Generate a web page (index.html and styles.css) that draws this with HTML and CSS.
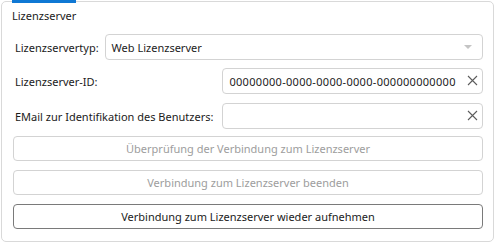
FILE: index.html
```html
<!DOCTYPE html>
<html lang="de">
<head>
  <meta charset="UTF-8">
  <meta name="viewport" content="width=device-width, initial-scale=1">
  <link rel="stylesheet" href="styles.css">
  <title>Lizenzserver</title>
</head>
<body>
  <div class="panel">
    <div class="tab">Lizenzserver</div>

    <div class="type-row">
      <label for="serverType">Lizenzservertyp:</label>
      <div class="select" id="serverType">
        <span>Web Lizenzserver</span>
        <span class="arrow"></span>
      </div>
    </div>

    <div class="fields">
      <label for="serverId">Lizenzserver-ID:</label>
      <div class="field">
        <input type="text" id="serverId" value="00000000-0000-0000-0000-000000000000">
        <svg class="clear" width="11" height="11" viewBox="0 0 11 11"><path d="M1 1 L10 10 M10 1 L1 10" stroke="#5c5c5c" stroke-width="1.1" fill="none"/></svg>
      </div>

      <label for="userMail">EMail zur Identifikation des Benutzers:</label>
      <div class="field">
        <input type="text" id="userMail" value="">
        <svg class="clear" width="11" height="11" viewBox="0 0 11 11"><path d="M1 1 L10 10 M10 1 L1 10" stroke="#5c5c5c" stroke-width="1.1" fill="none"/></svg>
      </div>
    </div>

    <div class="actions">
      <button class="btn" disabled>Überprüfung der Verbindung zum Lizenzserver</button>
      <button class="btn" disabled>Verbindung zum Lizenzserver beenden</button>
      <button class="btn">Verbindung zum Lizenzserver wieder aufnehmen</button>
    </div>
  </div>
</body>
</html>
```

FILE: styles.css
```css
* {
  margin: 0;
  padding: 0;
  box-sizing: border-box;
}
body {
  width: 495px;
  height: 243px;
  background: #ffffff;
  font-family: "Noto Sans", "Open Sans", sans-serif;
  font-size: 11px;
  color: #1b1b1b;
}
.panel {
  margin: 1px;
  width: 493px;
  height: 241px;
  border: 1px solid #d9d9d9;
  border-radius: 5px;
  padding: 0 10px 0 11px;
}
.tab {
  display: inline-block;
  margin-top: -2px;
  margin-left: -1px;
  padding-top: 5px;
  border-top: 3px solid #0f78d4;
  line-height: 16px;
  font-size: 11px;
}
/* first row */
.type-row {
  display: flex;
  align-items: center;
  gap: 6px;
  margin-top: 10px;
  padding-left: 2px;
}
.select {
  flex: 1;
  height: 26px;
  border: 1px solid #d3d3d3;
  border-radius: 4px;
  display: flex;
  align-items: center;
  justify-content: space-between;
  padding: 0 10px 0 6px;
}
.arrow {
  width: 0;
  height: 0;
  border-left: 4px solid transparent;
  border-right: 4px solid transparent;
  border-top: 4px solid #c4c4c4;
}
.fields {
  display: grid;
  grid-template-columns: auto 1fr;
  align-items: center;
  column-gap: 9px;
  row-gap: 9px;
  margin-top: 8px;
  padding-left: 2px;
}
.field {
  position: relative;
  height: 26px;
}
.field input {
  width: 100%;
  height: 26px;
  border: 1px solid #d3d3d3;
  border-radius: 4px;
  padding: 0 26px 0 6px;
  font-family: inherit;
  font-size: 11px;
  letter-spacing: 0.3px;
  color: #1b1b1b;
  outline: none;
}
.clear {
  position: absolute;
  right: 5px;
  top: 7px;
}
.actions {
  display: flex;
  flex-direction: column;
  gap: 9px;
  margin-top: 7px;
}
.btn {
  height: 25px;
  width: 100%;
  background: #ffffff;
  border: 1px solid #7a7a7a;
  border-radius: 4px;
  font-family: inherit;
  font-size: 11px;
  color: #1b1b1b;
}
.btn:disabled {
  border-color: #d3d3d3;
  color: #9d9d9d;
}
```
